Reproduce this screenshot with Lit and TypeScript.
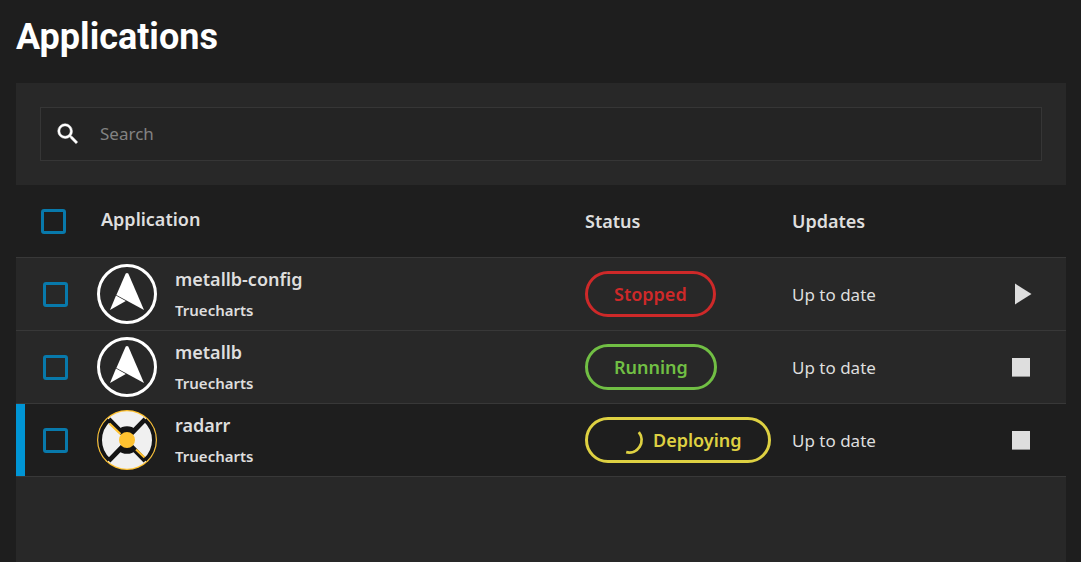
import { LitElement, html, css, svg } from "lit";
import { customElement, property, state } from "lit/decorators.js";
import { classMap } from "lit/directives/class-map.js";

type Status = "stopped" | "running" | "deploying";

interface App {
  name: string;
  catalog: string;
  logo: "truecharts" | "radarr";
  status: Status;
  updates: string;
  active?: boolean;
}

const APPS: App[] = [
  { name: "metallb-config", catalog: "Truecharts", logo: "truecharts", status: "stopped", updates: "Up to date" },
  { name: "metallb", catalog: "Truecharts", logo: "truecharts", status: "running", updates: "Up to date" },
  { name: "radarr", catalog: "Truecharts", logo: "radarr", status: "deploying", updates: "Up to date", active: true },
];

const LABELS: Record<Status, string> = {
  stopped: "Stopped",
  running: "Running",
  deploying: "Deploying",
};

@customElement("app-logo")
export class AppLogo extends LitElement {
  static styles = css`
    :host { display: block; flex: none; width: 60px; height: 60px; }
    svg { display: block; width: 100%; height: 100%; }
  `;

  @property() kind = "truecharts";

  private arrow() {
    return svg`
      <circle r="28.5" fill="none" stroke="#fff" stroke-width="3" />
      <path fill="#fff" d="M-1.4 -20.2Q0 -21.6 1.4 -20.2L17 16L-10.6 .9Z" />
      <path fill="#fff" d="M-11 1.6L-1.2 7L-17 16Z" />
    `;
  }

  private target() {
    return svg`
      <circle r="30" fill="#ffc230" />
      <circle r="28.8" fill="#f0f0f0" />
      <g fill="none" stroke="#141414">
        <path stroke-width="3.8" d="M-18 -20A26.9 26.9 0 0 0 -18 20M18 -20A26.9 26.9 0 0 1 18 20" />
        <path stroke-width="4.8" d="M-18.3 -20.8L0 -2L18.3 -20.8M-18.3 20.8L0 2L18.3 20.8" />
      </g>
      <path fill="#141414" d="M0 0L-9 -10.5A13.8 13.8 0 0 1 9 -10.5ZM0 0L-9 10.5A13.8 13.8 0 0 0 9 10.5Z" />
      <path fill="none" stroke="#ffc230" stroke-width="2.2" d="M-17.5 -16.5L-6.5 -6M9 9.5L17.5 17.5" />
      <circle r="8" fill="#ffc230" />
    `;
  }

  render() {
    return html`<svg viewBox="-30 -30 60 60" aria-hidden="true">
      ${this.kind === "radarr" ? this.target() : this.arrow()}
    </svg>`;
  }
}

@customElement("status-pill")
export class StatusPill extends LitElement {
  static styles = css`
    :host { display: block; }
    .pill {
      box-sizing: border-box;
      display: inline-flex;
      align-items: center;
      gap: 9px;
      height: 46px;
      padding: 0 26px;
      border: 3px solid currentColor;
      border-radius: 23px;
      font-weight: 600;
      white-space: nowrap;
      vertical-align: middle;
    }
    .stopped { color: #ce2929; }
    .running { color: #71bf44; }
    .deploying { color: #ded142; }
    svg { width: 30px; height: 30px; }
  `;

  @property() status: Status = "stopped";

  render() {
    return html`<span class=${classMap({ pill: true, [this.status]: true })}>
      ${this.status === "deploying"
        ? html`<svg viewBox="-15 -15 30 30" aria-hidden="true">
            <path d="M9.8 -7.8A12.5 12.5 0 0 1 -2.8 12.2" fill="none" stroke="currentColor" stroke-width="2.8" />
          </svg>`
        : null}
      <span>${LABELS[this.status]}</span>
    </span>`;
  }
}

@customElement("app-root")
export class AppRoot extends LitElement {
  static styles = css`
    :host {
      display: block;
      background: #1e1e1e;
      color: #dedede;
      font: 18px/31px "Noto Sans", "Open Sans", sans-serif;
    }
    .page {
      box-sizing: border-box;
      display: flex;
      flex-direction: column;
      min-height: 100vh;
      padding: 13px 15px 0 16px;
    }
    h1 {
      margin: 0 0 22px;
      color: #fff;
      font: 700 36px/48px Roboto, sans-serif;
    }
    .panel { flex: 1; background: #282828; }
    .toolbar { padding: 24px; }
    .search {
      box-sizing: border-box;
      display: flex;
      align-items: center;
      gap: 18px;
      height: 54px;
      padding: 0 13px;
      border: 1px solid #363636;
      background: #242424;
      color: #fff;
    }
    .search svg { flex: none; width: 28px; height: 28px; }
    .search input {
      flex: 1;
      min-width: 0;
      padding: 0;
      border: 0;
      outline: 0;
      background: none;
      color: #dedede;
      font: 17px/24px "Noto Sans", "Open Sans", sans-serif;
    }
    .search input::placeholder { color: #828282; opacity: 1; }
    table {
      width: 100%;
      border-collapse: separate;
      border-spacing: 0;
      table-layout: fixed;
    }
    .col-check { width: 81px; }
    .col-status { width: 207px; }
    .col-updates { width: 211px; }
    .col-action { width: 63px; }
    th, td {
      box-sizing: border-box;
      height: 73px;
      padding: 0;
      border-bottom: 1px solid #383838;
      text-align: left;
      vertical-align: middle;
    }
    th { font-weight: 600; }
    thead, .active { background: #1e1e1e; }
    thead .check { padding-left: 25px; }
    thead .title { padding: 0 0 4px 4px; }
    .check { padding-left: 27px; }
    .active .check { box-shadow: inset 9px 0 #0095d5; }
    .check input {
      appearance: none;
      box-sizing: border-box;
      display: block;
      width: 25px;
      height: 25px;
      margin: 0;
      border: 3px solid #0879ab;
      border-radius: 3px;
    }
    .check input:checked { background: #0879ab; }
    .app { display: flex; align-items: center; gap: 18px; }
    .names { padding-top: 2px; }
    .name { display: block; font-weight: 600; }
    .catalog { display: block; font-size: 15px; font-weight: 600; }
    .updates { font-size: 17px; }
    .action {
      display: block;
      width: 36px;
      height: 36px;
      padding: 0;
      border: 0;
      background: none;
      color: #dedede;
    }
    .action svg { display: block; width: 36px; height: 36px; }
  `;

  @state() private query = "";

  private row(app: App) {
    const stopped = app.status === "stopped";
    return html`<tr class=${classMap({ active: !!app.active })}>
      <td class="check"><input type="checkbox" aria-label=${`Select ${app.name}`} /></td>
      <td>
        <div class="app">
          <app-logo kind=${app.logo}></app-logo>
          <div class="names"><span class="name">${app.name}</span><span class="catalog">${app.catalog}</span></div>
        </div>
      </td>
      <td><status-pill status=${app.status}></status-pill></td>
      <td class="updates">${app.updates}</td>
      <td>
        <button class="action" type="button" aria-label=${`${stopped ? "Start" : "Stop"} ${app.name}`}>
          <svg viewBox="0 0 24 24" fill="currentColor">
            ${stopped ? svg`<path d="M8 5v14l11-7z" />` : svg`<path d="M6 6h12v12.4H6z" />`}
          </svg>
        </button>
      </td>
    </tr>`;
  }

  render() {
    const shown = APPS.filter((a) => a.name.includes(this.query.toLowerCase()));
    return html`<main class="page">
      <h1>Applications</h1>
      <section class="panel">
        <div class="toolbar">
          <label class="search">
            <svg viewBox="0 0 24 24" fill="currentColor" aria-hidden="true">
              <path stroke="currentColor" stroke-width=".4" d="M9.5 3.2A6.3 6.3 0 0 1 15.8 9.5c0 1.61-.5 3.09-1.36 4.23l.27.27h.79l4.8 4.9-1.4 1.4-4.9-4.8v-.79l-.27-.27A6.4 6.4 0 0 1 9.5 15.8a6.3 6.3 0 0 1 0-12.6m0 1.9C7 5.1 5.1 7 5.1 9.5S7 13.9 9.5 13.9s4.4-1.9 4.4-4.4S12 5.1 9.5 5.1z" />
            </svg>
            <input
              type="text"
              placeholder="Search"
              aria-label="Search"
              .value=${this.query}
              @input=${(e: Event) => (this.query = (e.target as HTMLInputElement).value)}
            />
          </label>
        </div>
        <table>
          <colgroup>
            <col class="col-check" /><col /><col class="col-status" /><col class="col-updates" /><col class="col-action" />
          </colgroup>
          <thead>
            <tr>
              <th class="check"><input type="checkbox" aria-label="Select all" /></th>
              <th class="title" scope="col">Application</th>
              <th scope="col">Status</th>
              <th scope="col">Updates</th>
              <th></th>
            </tr>
          </thead>
          <tbody>${shown.map((a) => this.row(a))}</tbody>
        </table>
      </section>
    </main>`;
  }
}
